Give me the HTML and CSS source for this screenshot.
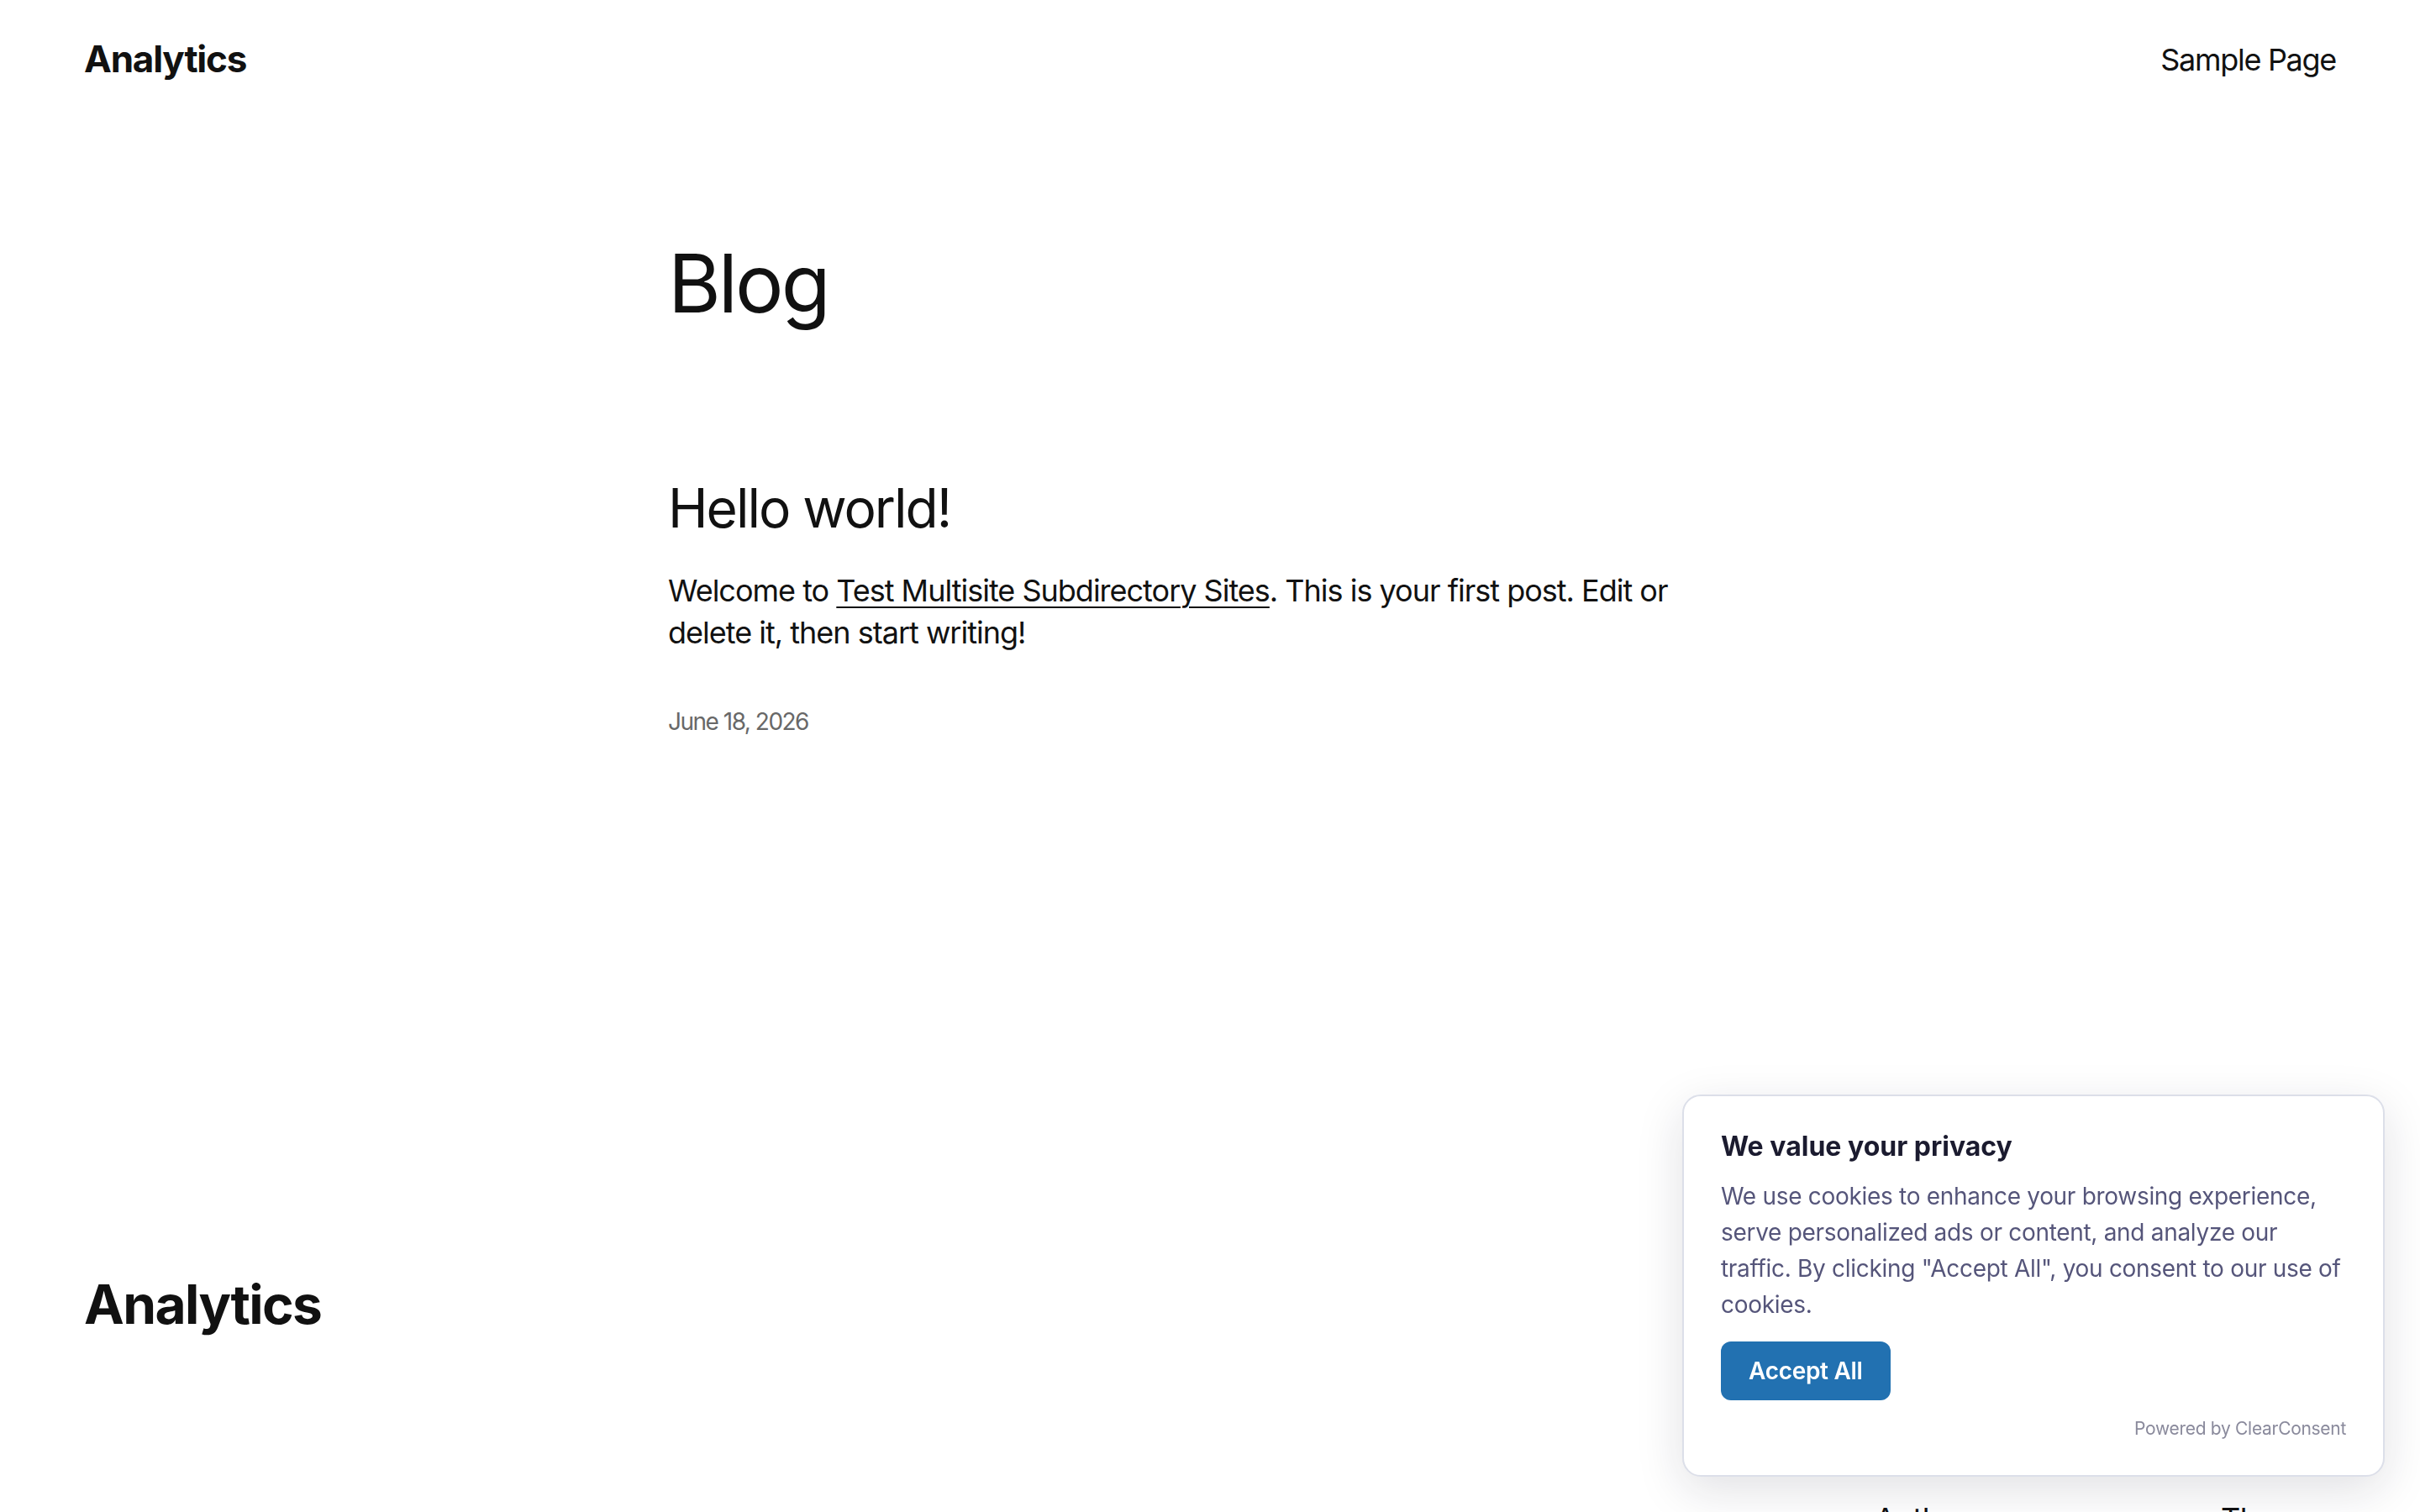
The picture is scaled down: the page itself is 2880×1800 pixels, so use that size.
FILE: index.html
```html
<!DOCTYPE html>
<html lang="en">
<head>
  <meta charset="UTF-8">
  <title>Blog – Analytics</title>
  <meta name="viewport" content="width=device-width, initial-scale=1.0">
  <link rel="stylesheet" href="styles.css">
</head>
<body>
  <header class="site-header">
    <a class="site-title" href="#">Analytics</a>
    <nav class="site-nav">
      <a href="#">Sample Page</a>
    </nav>
  </header>

  <main class="site-main">
    <h1 class="page-title">Blog</h1>

    <article class="post">
      <h2 class="post-title"><a href="#">Hello world!</a></h2>
      <p class="post-excerpt">Welcome to <a href="#">Test Multisite Subdirectory Sites</a>. This is your first post. Edit or delete it, then start writing!</p>
      <time class="post-date" datetime="2026-06-18">June 18, 2026</time>
    </article>
  </main>

  <footer class="site-footer">
    <div class="footer-row">
      <h2 class="footer-title">Analytics</h2>
      <div class="footer-menus">
        <ul class="footer-nav">
          <li><a href="#">Blog</a></li>
          <li><a href="#">About</a></li>
          <li><a href="#">FAQs</a></li>
          <li><a href="#">Authors</a></li>
        </ul>
        <ul class="footer-nav">
          <li><a href="#">Events</a></li>
          <li><a href="#">Shop</a></li>
          <li><a href="#">Patterns</a></li>
          <li><a href="#">Themes</a></li>
        </ul>
      </div>
    </div>
  </footer>

  <!-- consent banner, sits over the page -->
  <div class="cookie-banner">
    <h3 class="cookie-title">We value your privacy</h3>
    <p class="cookie-text">We use cookies to enhance your browsing experience, serve personalized ads or content, and analyze our traffic. By clicking "Accept All", you consent to our use of cookies.</p>
    <button class="cookie-accept">Accept All</button>
    <p class="cookie-powered">Powered by ClearConsent</p>
  </div>
</body>
</html>
```

FILE: styles.css
```css
body {
  margin: 0;
  font-family: Inter, "Noto Sans", sans-serif;
  color: #111111;
  background: #fff;
}

a {
  color: inherit;
  text-decoration: none;
}

.site-header {
  display: flex;
  align-items: center;
  justify-content: space-between;
  padding: 40px 100px;
}

.site-title {
  font-size: 44px;
  font-weight: 700;
  line-height: 1.4;
  letter-spacing: -1.2px;
}

.site-nav a {
  font-size: 36px;
  line-height: 1.4;
  letter-spacing: -1.3px;
}

.site-main {
  width: 1290px;
  margin: 138px auto 0;
}

.page-title {
  margin: 0;
  font-size: 96px;
  font-weight: 400;
  line-height: 1.2;
  letter-spacing: -3px;
}

.post {
  margin-top: 172px;
}

.post-title {
  margin: 0;
  font-size: 64px;
  font-weight: 400;
  line-height: 1.2;
  letter-spacing: -2px;
}

.post-excerpt {
  margin: 34px 0 0;
  font-size: 36px;
  line-height: 1.4;
  letter-spacing: -1px;
}

.post-excerpt a {
  text-decoration: underline;
  text-decoration-thickness: 2px;
  text-underline-offset: 6px;
}

.post-date {
  display: block;
  margin-top: 62px;
  font-size: 28px;
  line-height: 1.4;
  color: #686868;
  letter-spacing: -1.5px;
}

.site-footer {
  padding: 635px 100px 200px;
}

.footer-row {
  display: flex;
  justify-content: space-between;
  align-items: flex-start;
}

.footer-title {
  margin: 0;
  font-size: 64px;
  font-weight: 700;
  line-height: 1.2;
  letter-spacing: -1.6px;
}

.footer-menus {
  display: flex;
  gap: 282px;
}

.footer-nav {
  list-style: none;
  margin: 0;
  padding: 0;
  display: flex;
  flex-direction: column;
  gap: 39px;
}

.footer-nav a {
  font-size: 36px;
  line-height: 1.4;
  letter-spacing: -0.5px;
}

.cookie-banner {
  position: fixed;
  right: 42px;
  bottom: 42px;
  width: 836px;
  box-sizing: border-box;
  padding: 41px 44px 40px;
  background: #fff;
  border: 2px solid #dcdfe9;
  border-radius: 22px;
  box-shadow: 0 16px 56px rgba(20, 20, 50, 0.13);
}

.cookie-title {
  margin: 0;
  font-size: 32px;
  font-weight: 700;
  line-height: 1.2;
  color: #1b1b2f;
}

.cookie-text {
  margin: 19px 0 0;
  font-size: 28px;
  line-height: 43px;
  letter-spacing: -0.3px;
  color: #55557a;
}

.cookie-accept {
  margin-top: 22px;
  padding: 17px 33px;
  font-family: inherit;
  font-size: 28px;
  font-weight: 600;
  line-height: 36px;
  letter-spacing: -0.3px;
  color: #fff;
  background: #2271b1;
  border: none;
  border-radius: 12px;
  cursor: pointer;
}

.cookie-powered {
  margin: 18px 0 0;
  font-size: 21px;
  line-height: 31px;
  letter-spacing: -0.3px;
  text-align: right;
  color: #8a8a9c;
}
```
